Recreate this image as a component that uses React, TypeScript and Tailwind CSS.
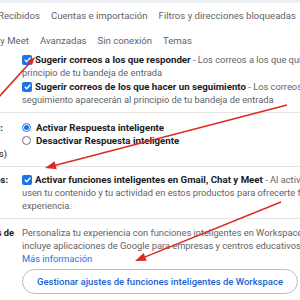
const sans = "font-['Roboto','Liberation_Sans',sans-serif]"

function Check() {
  return (
    <span className="inline-flex w-[10px] h-[10px] rounded-[2px] bg-[#1a73e8] items-center justify-center align-[-1px] mr-[3px]">
      <svg viewBox="0 0 10 10" className="w-[9px] h-[9px]">
        <path d="M2 5.3l2.1 2.1L8.2 3" stroke="white" strokeWidth="1.6" fill="none" />
      </svg>
    </span>
  )
}

function Radio({ on }: { on?: boolean }) {
  return (
    <span
      className={`inline-flex w-[9px] h-[9px] rounded-full border items-center justify-center mr-[5px] ${
        on ? 'border-[#1a73e8]' : 'border-[#757575]'
      }`}
    >
      {on && <span className="w-[5px] h-[5px] rounded-full bg-[#1a73e8]" />}
    </span>
  )
}

function Label({ text, pr }: { text: string; pr: string }) {
  return (
    <div className={`flex justify-end overflow-hidden whitespace-nowrap h-[13px] ${pr}`}>
      <span>{text}</span>
    </div>
  )
}

type Pt = [number, number]

function Arrow({ from, to, head = 11 }: { from: Pt; to: Pt; head?: number }) {
  const dx = to[0] - from[0]
  const dy = to[1] - from[1]
  const len = Math.hypot(dx, dy)
  const ux = dx / len
  const uy = dy / len
  const bx = to[0] - ux * head
  const by = to[1] - uy * head
  const w = head * 0.38
  const pts = `${to[0]},${to[1]} ${bx - uy * w},${by + ux * w} ${bx + uy * w},${by - ux * w}`
  return (
    <g>
      <line x1={from[0]} y1={from[1]} x2={bx + ux * 2} y2={by + uy * 2} stroke="#db2b22" strokeWidth="1.6" />
      <polygon points={pts} fill="#db2b22" />
    </g>
  )
}

export default function App() {
  return (
    <div className={`relative w-[300px] h-[300px] overflow-hidden bg-white ${sans} text-[9.3px] leading-[13px] text-[#202124]`}>
      <div className="h-[3px] bg-[#eef1f5]" />

      <div className="flex h-[24px] items-center gap-[11px] whitespace-nowrap text-[9.6px] text-[#5f6368] -ml-[2px]">
        <span>Recibidos</span>
        <span>Cuentas e importación</span>
        <span>Filtros y direcciones bloqueadas</span>
      </div>
      <div className="flex h-[26px] items-center gap-[11px] whitespace-nowrap text-[9.6px] text-[#5f6368] -ml-[22px]">
        <span>Chat y Meet</span>
        <span>Avanzadas</span>
        <span>Sin conexión</span>
        <span>Temas</span>
      </div>

      <div className="grid grid-cols-[22px_1fr] pb-[6px] border-b border-[#e3e3e3]">
        <div />
        <div className="whitespace-nowrap">
          <div>
            <Check />
            <b className="font-bold text-[9.7px]">Sugerir correos a los que responder</b>
            <span className="text-[#5f6368]"> - Los correos a los que quizá quieras responder aparecerán al</span>
          </div>
          <div className="text-[#5f6368]">principio de tu bandeja de entrada</div>
          <div className="mt-[1px]">
            <Check />
            <b className="font-bold text-[9.7px]">Sugerir correos de los que hacer un seguimiento</b>
            <span className="text-[#5f6368]"> - Los correos de los que quizá quieras hacer un</span>
          </div>
          <div className="text-[#5f6368]">seguimiento aparecerán al principio de tu bandeja de entrada</div>
        </div>
      </div>

      <div className="grid grid-cols-[22px_1fr] pt-[8px] pb-[6px] border-b border-[#e3e3e3]">
        <div className="font-bold">
          <Label text="Respuesta inteligente:" pr="pr-[19px]" />
          <div className="h-[13px]" />
          <div className="font-normal">
            <Label text="(Puede que no esté disponible en todos los idiomas y países)" pr="pr-[15px]" />
          </div>
        </div>
        <div className="whitespace-nowrap font-bold text-[9.7px]">
          <div className="flex items-center h-[13px]">
            <Radio on />
            Activar Respuesta inteligente
          </div>
          <div className="flex items-center h-[13px]">
            <Radio />
            Desactivar Respuesta inteligente
          </div>
        </div>
      </div>

      <div className="grid grid-cols-[22px_1fr] pt-[6px] pb-[6px] border-b border-[#e3e3e3]">
        <div className="font-bold">
          <Label text="Funciones inteligentes:" pr="pr-[14px]" />
        </div>
        <div className="whitespace-nowrap">
          <div>
            <Check />
            <b className="font-bold text-[9.7px]">Activar funciones inteligentes en Gmail, Chat y Meet</b>
            <span className="text-[#5f6368]"> - Al activar esta opción, aceptas que Gmail, Chat y Meet</span>
          </div>
          <div className="text-[#5f6368]">usen tu contenido y tu actividad en estos productos para ofrecerte funciones y una</div>
          <div className="text-[#5f6368]">experiencia.</div>
        </div>
      </div>

      <div className="grid grid-cols-[22px_1fr] pt-[7px]">
        <div className="font-bold">
          <Label text="Funciones inteligentes de" pr="pr-[8px]" />
        </div>
        <div className="whitespace-nowrap">
          <div className="text-[#5f6368]">Personaliza tu experiencia con funciones inteligentes en Workspace, que</div>
          <div className="text-[#5f6368]">incluye aplicaciones de Google para empresas y centros educativos</div>
          <div className="text-[#1a73e8]">Más información</div>
          <button className="mt-[4px] w-[276px] h-[25px] rounded-full border border-[#b9bdc1] text-[#1a62d2] font-medium text-[9.5px] flex items-center justify-center">
            Gestionar ajustes de funciones inteligentes de Workspace
          </button>
        </div>
      </div>

      <svg className="absolute inset-0 pointer-events-none" width="300" height="300" viewBox="0 0 300 300">
        <Arrow from={[-2, 98]} to={[35, 57]} head={8} />
        <Arrow from={[287, 105]} to={[45, 168]} />
        <Arrow from={[281, 202]} to={[135, 261]} />
      </svg>
    </div>
  )
}
